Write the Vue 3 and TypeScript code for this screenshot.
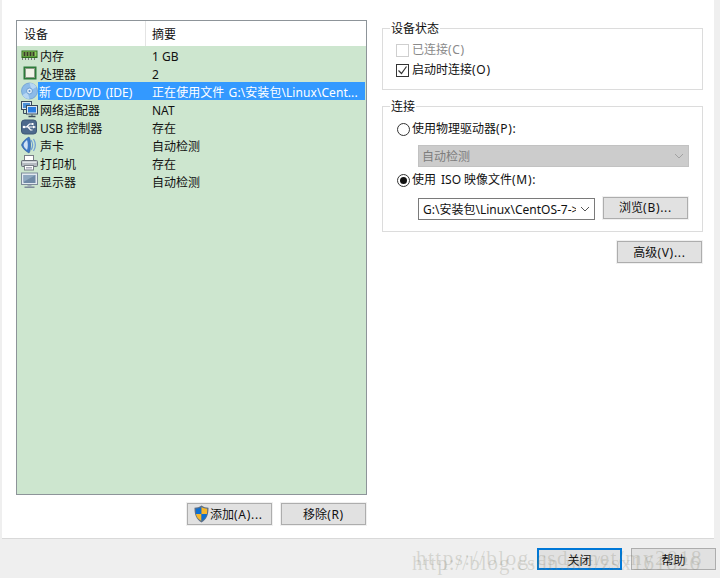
<script setup lang="ts">
interface Row { icon: string; name: string; value: string; selected?: boolean }
const rows: Row[] = [
  { icon: 'ram', name: '内存', value: '1 GB' },
  { icon: 'cpu', name: '处理器', value: '2' },
  { icon: 'cd', name: '新 CD/DVD (IDE)', value: '正在使用文件 G:\\安装包\\Linux\\Cent...', selected: true },
  { icon: 'net', name: '网络适配器', value: 'NAT' },
  { icon: 'usb', name: 'USB 控制器', value: '存在' },
  { icon: 'sound', name: '声卡', value: '自动检测' },
  { icon: 'printer', name: '打印机', value: '存在' },
  { icon: 'display', name: '显示器', value: '自动检测' },
]
</script>

<template>
  <div class="window">
    <main class="main">
      <section class="left">
        <div class="list">
          <div class="head">
            <div class="h-name">设备</div>
            <div class="h-value">摘要</div>
          </div>
          <div v-for="r in rows" :key="r.name" class="row" :class="{ sel: r.selected }">
            <span class="ico">
              <svg v-if="r.icon === 'ram'" width="18" height="18" viewBox="0 0 18 18">
                <rect x="0.500" y="4.500" width="16" height="7.500" fill="#2f6d1f" />
                <rect x="1.500" y="5.500" width="14" height="5" fill="#8fcf5c" />
                <path d="M2.500 6h2v4h-2zM5.500 6h2v4h-2zM8.500 6h2v4h-2zM11.500 6h2v4h-2z" fill="#3b3b2a" />
                <path d="M1.500 12v2M4.500 12v2M7.500 12v2M10.500 12v2M13.500 12v2" stroke="#777" />
              </svg>
              <svg v-else-if="r.icon === 'cpu'" width="18" height="18" viewBox="0 0 18 18">
                <rect x="2.500" y="2.500" width="13" height="13" fill="#2c7b3a" />
                <rect x="4.500" y="4.500" width="9" height="9" fill="#f1f3e8" stroke="#8a9c86" />
              </svg>
              <svg v-else-if="r.icon === 'cd'" width="18" height="18" viewBox="0 0 18 18">
                <circle cx="8.500" cy="9" r="8" fill="#8dbbe8" stroke="#6e9fd2" stroke-width=".8" />
                <path d="M8.500 1a8 8 0 0 1 7 4l-5 3zM8.500 17a8 8 0 0 1-7-4l5-3z" fill="#b6d6f3" />
                <circle cx="8.500" cy="9" r="3" fill="#dcebf8" stroke="#6e9fd2" />
                <circle cx="8.500" cy="9" r="1" fill="#5d8fc5" />
              </svg>
              <svg v-else-if="r.icon === 'net'" width="18" height="18" viewBox="0 0 18 18">
                <rect x="0.500" y="1.500" width="10" height="8" fill="#dbe9f6" stroke="#3a4a5c" />
                <rect x="2" y="3" width="7" height="5" fill="#4b8fd8" />
                <path d="M2.500 10v3.500h3" fill="none" stroke="#3a4a5c" />
                <rect x="5.500" y="5.500" width="11" height="8.500" fill="#dbe9f6" stroke="#3a4a5c" />
                <rect x="7" y="7" width="8" height="5.500" fill="#2a7de1" />
                <path d="M7.500 16.500h7" stroke="#3a4a5c" stroke-width="1.500" />
                <path d="M11 14.500v1.500" stroke="#3a4a5c" />
              </svg>
              <svg v-else-if="r.icon === 'usb'" width="18" height="18" viewBox="0 0 18 18">
                <rect x="0.500" y="2" width="15" height="14" rx="3" fill="#4c6a8c" stroke="#3c5674" />
                <path d="M2.500 9h10.500M5.500 9l3-3h2M7 9l2.500 3h2" fill="none" stroke="#fff" stroke-width="1.200" />
                <path d="M12 7.500l3 1.500-3 1.500z" fill="#fff" />
                <rect x="10.500" y="5" width="2" height="2" fill="#fff" />
                <circle cx="3" cy="9" r="1.300" fill="#fff" />
              </svg>
              <svg v-else-if="r.icon === 'sound'" width="18" height="18" viewBox="0 0 18 18">
                <path d="M8 1C4 3 1.500 6 .5 9c1 3 3.500 6 7.500 8 2-2 2-14 0-16z" fill="#3d78c4" stroke="#2b5a9a" stroke-width=".6" />
                <path d="M6 4C4 5.500 3 7 2.500 9c.5 2 1.500 3.500 3.500 5 1-2 1-8 0-10z" fill="#cfe2f6" />
                <path d="M10 4c2 3 2 7 0 10M12.500 3c2.500 4 2.500 8 0 12" fill="none" stroke="#6f9fd6" stroke-width="1.200" />
              </svg>
              <svg v-else-if="r.icon === 'printer'" width="18" height="18" viewBox="0 0 18 18">
                <rect x="3.500" y="1.500" width="9" height="5" fill="#fff" stroke="#7b8088" />
                <rect x="0.500" y="6.500" width="16" height="6" rx="1" fill="#b5bac1" stroke="#6a7078" />
                <rect x="1.500" y="7.500" width="14" height="1.500" fill="#e4e7ea" />
                <rect x="3.500" y="11.500" width="9" height="4.500" fill="#fff" stroke="#7b8088" />
                <path d="M5 13.500h6M5 15h6" stroke="#aab" />
              </svg>
              <svg v-else width="18" height="18" viewBox="0 0 18 18">
                <rect x="0.500" y="1" width="16" height="11.500" fill="#e2e9f0" stroke="#7d8b9a" />
                <rect x="2.500" y="3" width="12" height="8" fill="#6f8aa6" />
                <path d="M2.500 3h12L2.500 10z" fill="#8ea7bf" />
                <path d="M6.500 13h4v1.500h-4z" fill="#a0adb9" />
                <path d="M3.500 14.500h10V16h-10z" fill="#7d8b9a" />
              </svg>
            </span>
            <span class="name">{{ r.name }}</span>
            <span class="value">{{ r.value }}</span>
          </div>
        </div>
        <div class="left-actions">
          <button class="btn add">
            <svg width="17" height="18" viewBox="0 0 17 18">
              <path d="M8.500 .5c2 1.500 4.500 2.200 7 2.200 0 7-1.500 11.500-7 14.800C3 14.200 1.500 9.700 1.500 2.700c2.500 0 5-.7 7-2.200z" fill="#5d6f86" />
              <path d="M8.500 2v7H3c0-2 0-3.500-.2-5.200C5 3.600 7 3 8.500 2z" fill="#0f6fd0" />
              <path d="M8.500 2c1.500 1 3.500 1.600 5.700 1.800 0 2-.1 3.600-.3 5.200H8.500z" fill="#f6b72c" />
              <path d="M3 9h5.500v7C5 14 3.500 12 3 9z" fill="#f6b72c" />
              <path d="M8.500 9h5.400c-.5 3-2 5-5.400 7z" fill="#0f6fd0" />
            </svg>
            <span class="lbl">添加<span class="key">(A)...</span></span>
          </button>
          <button class="btn"><span class="lbl">移除<span class="key">(R)</span></span></button>
        </div>
      </section>

      <section class="right">
        <fieldset class="group status">
          <legend>设备状态</legend>
          <label class="opt disabled"><span class="check"></span>已连接<span class="key">(C)</span></label>
          <label class="opt second">
            <span class="check on">
              <svg width="11" height="11" viewBox="0 0 11 11"><path d="M1.500 5.500l3 3 5-7" fill="none" stroke="#333" stroke-width="1.200" /></svg>
            </span>启动时连接<span class="key">(O)</span>
          </label>
        </fieldset>

        <fieldset class="group conn">
          <legend>连接</legend>
          <label class="opt physical"><span class="radio"></span>使用物理驱动器<span class="key">(P):</span></label>
          <div class="select off">
            <span>自动检测</span>
            <svg width="10" height="6" viewBox="0 0 10 6"><path d="M1 1l4 4 4-4" fill="none" stroke="#a2a2a2" /></svg>
          </div>
          <label class="opt iso"><span class="radio on"></span>使用<span class="iso-name">ISO</span>映像文件<span class="key">(M):</span></label>
          <div class="file-row">
            <div class="select file">
              <span class="file-text">G:\安装包\Linux\CentOS-7-&gt;</span>
              <svg width="10" height="6" viewBox="0 0 10 6"><path d="M1 1l4 4 4-4" fill="none" stroke="#555" /></svg>
            </div>
            <button class="btn browse"><span class="lbl">浏览<span class="key">(B)...</span></span></button>
          </div>
        </fieldset>

        <div class="adv-row"><button class="btn"><span class="lbl">高级<span class="key">(V)...</span></span></button></div>
      </section>
    </main>

    <footer class="footer">
      <button class="btn primary"><span class="lbl">关闭</span></button>
      <button class="btn"><span class="lbl">帮助</span></button>
    </footer>

    <div class="wm wm1">https://blog.csdn.net/my2018</div>
    <div class="wm wm2">http://blog.csdn.net/zsx161826</div>
  </div>
</template>

<style>
html, body { margin: 0; background: #efefef; }
</style>

<style scoped>
.window {
  position: relative;
  width: 720px;
  height: 578px;
  overflow: hidden;
  background: #efefef;
  font-family: "Noto Sans", "Noto Sans CJK SC", sans-serif;
  font-size: 12px;
  color: #111;
  display: flex;
  flex-direction: column;
}
.main {
  box-sizing: border-box;
  margin-left: 2px;
  width: 712px;
  height: 539px;
  background: #fff;
  border-bottom: 1px solid #d9d9d9;
  display: flex;
  padding-left: 14px;
}
.left { width: 351px; padding-top: 20px; display: flex; flex-direction: column; }
.list {
  box-sizing: border-box;
  height: 475px;
  border: 1px solid #8d9499;
  background: #cde6cf;
}
.head { height: 25px; background: #fff; display: flex; line-height: 27px; }
.h-name { width: 129px; padding-left: 7px; box-sizing: border-box; border-right: 1px solid #e4e4e4; }
.h-value { padding-left: 6px; }
.row { height: 18px; display: flex; line-height: 21px; white-space: nowrap; }
.ico { width: 21px; flex: none; padding-left: 4px; box-sizing: border-box; height: 18px; }
.ico svg { display: block; }
.name { width: 114px; flex: none; padding-left: 2px; box-sizing: border-box; }
.value { flex: 1; }
.row.sel { color: #fff; }
.row.sel .name, .row.sel .value { background: #3399ff; }
.row.sel .name { padding-left: 1px; word-spacing: 1.500px; }
.row.sel .value { margin-right: 1px; word-spacing: 1px; letter-spacing: 0.070px; }
.left-actions { display: flex; justify-content: flex-end; gap: 9px; margin-top: 8px; padding-right: 1px; }
.btn {
  box-sizing: border-box;
  width: 85px;
  height: 22px;
  padding: 0;
  font: inherit;
  color: #111;
  background: #e1e1e1;
  border: 1px solid #adadad;
  outline: 1px solid #f0f0f0;
  display: flex;
  align-items: center;
  justify-content: center;
  line-height: 20px;
}
.lbl { position: relative; top: 1px; white-space: nowrap; }
.key { letter-spacing: 0.700px; }
.add { justify-content: flex-start; padding-left: 5px; }
.primary { border: 2px solid #0078d7; outline: none; }
.footer .lbl { top: 2px; }
.right { width: 321px; margin-left: 15px; padding-top: 20px; display: flex; flex-direction: column; }
.group { margin: 0; border: 1px solid #dcdcdc; min-inline-size: 0; box-sizing: border-box; padding: 0 0 0 13px; }
legend { margin-left: -6px; padding: 0 1px; line-height: 18px; height: 16px; }
.status { height: 70px; }
.conn { height: 134px; margin-top: 8px; }
.opt { display: flex; align-items: center; height: 20px; gap: 0; line-height: 20px; white-space: nowrap; }
.status .opt { margin-top: 4px; }
.status .second { margin-top: 0; }
.disabled { color: #8a8a8a; }
.check {
  width: 13px; height: 13px; box-sizing: border-box; border: 1px solid #333; background: #fff;
  display: flex; align-items: center; justify-content: center; margin-right: 3px;
}
.disabled .check { border-color: #cfcfcf; }
.radio {
  width: 13px; height: 13px; box-sizing: border-box; border: 1px solid #333; border-radius: 50%; background: #fff;
  display: flex; align-items: center; justify-content: center; margin: 0 2px 0 1px;
}
.radio.on::after { content: ""; width: 7px; height: 7px; border-radius: 50%; background: #111; }
.conn .physical { margin-top: 5px; }
.select {
  box-sizing: border-box;
  height: 22px;
  display: flex;
  align-items: center;
  justify-content: space-between;
  border: 1px solid #7a7a7a;
  background: #fff;
}
.select.off {
  width: 271px;
  margin: 6px 0 0 22px;
  background: #cccccc;
  border-color: #c2c2c2;
  color: #7d7d7d;
  padding: 0 4px 0 3px;
}
.conn .iso { margin-top: 3px; }
.iso-name { margin: 0 3px 0 5px; }
.file-row { display: flex; gap: 8px; align-items: flex-start; margin: 7px 0 0 22px; }
.select.file { width: 177px; padding: 0 4px 1px; margin-top: 1px; }
.file-text { overflow: hidden; white-space: nowrap; width: 153px; }
.browse { flex: none; }
.browse .lbl { top: 0; }
.adv-row { display: flex; justify-content: flex-end; margin-top: 9px; padding-right: 1px; }
.footer { display: flex; justify-content: flex-end; gap: 9px; padding: 9px 4px 0 0; }
.wm {
  position: absolute;
  font-family: "Liberation Serif", serif;
  font-size: 21px;
  color: rgba(120, 120, 100, 0.22);
  white-space: nowrap;
  pointer-events: none;
}
.wm1 { left: 416px; top: 546px; letter-spacing: 1.500px; }
.wm2 { left: 412px; top: 551px; letter-spacing: 1px; }
</style>
